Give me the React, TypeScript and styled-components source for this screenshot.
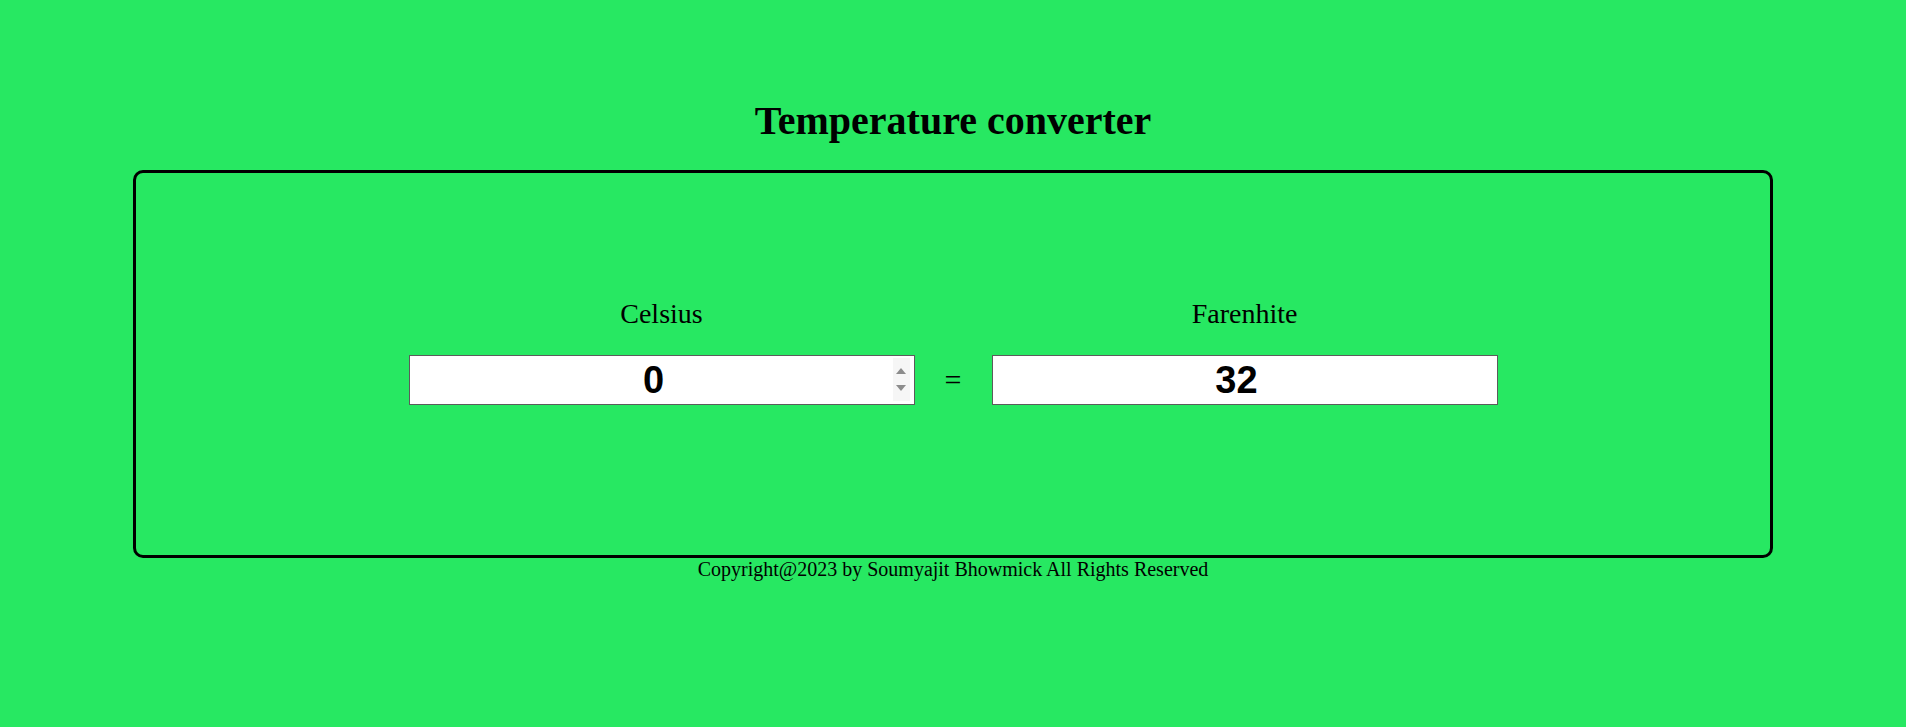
import { useState } from 'react';
import styled, { createGlobalStyle } from 'styled-components';

const GlobalStyle = createGlobalStyle`
  html, body {
    margin: 0;
    padding: 0;
    background: #27e862;
  }
  body {
    font-family: "Liberation Serif", "Times New Roman", serif;
    color: #000;
  }
`;

const Page = styled.div`
  min-height: 100vh;
  padding-top: 99px;
  box-sizing: border-box;
  display: flex;
  flex-direction: column;
  align-items: center;
`;

const Title = styled.h1`
  margin: 0 0 27px;
  font-size: 40px;
  line-height: 44px;
  font-weight: bold;
  text-align: center;
`;

const Card = styled.div`
  width: 86%;
  height: 388px;
  box-sizing: border-box;
  border: 3px solid #000;
  border-radius: 10px;
  padding-top: 125px;
  display: flex;
  justify-content: center;
  align-items: flex-start;
`;

const Row = styled.div`
  display: flex;
  align-items: flex-end;
  gap: 30px;
`;

const Column = styled.div`
  width: 506px;
  display: flex;
  flex-direction: column;
  align-items: center;
  gap: 26px;
`;

const Label = styled.label`
  font-size: 28px;
  line-height: 31px;
`;

const Field = styled.div`
  position: relative;
  width: 100%;
`;

const NumberInput = styled.input`
  display: block;
  width: 100%;
  height: 50px;
  box-sizing: border-box;
  margin: 0;
  padding: 0 18px 0 2px;
  border: 1px solid #5c5c5c;
  border-radius: 0;
  background: #fff;
  font-family: "Liberation Sans", Arial, sans-serif;
  font-size: 38px;
  font-weight: bold;
  color: #000;
  text-align: center;
  outline: none;
  -moz-appearance: textfield;

  &::-webkit-inner-spin-button,
  &::-webkit-outer-spin-button {
    -webkit-appearance: none;
    margin: 0;
  }
`;

const Spinner = styled.div`
  position: absolute;
  top: 3px;
  bottom: 4px;
  right: 5px;
  width: 17px;
  background: #f6f6f6;
  display: flex;
  flex-direction: column;
  justify-content: space-evenly;
  align-items: center;
`;

const Arrow = styled.button<{ $down?: boolean }>`
  width: 0;
  height: 0;
  padding: 0;
  border: none;
  border-left: 5px solid transparent;
  border-right: 5px solid transparent;
  ${p => p.$down ? 'border-top: 6px solid #8c8c8c;' : 'border-bottom: 6px solid #8c8c8c;'}
  background: transparent;
  cursor: pointer;
`;

const Equals = styled.div`
  width: 17px;
  height: 50px;
  display: flex;
  align-items: center;
  justify-content: center;
  font-size: 30px;
`;

const Footer = styled.div`
  font-size: 20px;
  line-height: 23px;
  text-align: center;
`;

export default function App() {
  const [celsius, setCelsius] = useState<number>(0);
  const fahrenheit = Math.round((celsius * 9 / 5 + 32) * 100) / 100;

  return (
    <>
      <GlobalStyle />
      <Page>
        <Title>Temperature converter</Title>
        <Card>
          <Row>
            <Column>
              <Label htmlFor="celsius">Celsius</Label>
              <Field>
                <NumberInput
                  id="celsius"
                  type="number"
                  value={celsius}
                  onChange={e => setCelsius(Number(e.target.value))}
                />
                <Spinner>
                  <Arrow aria-label="increase" onClick={() => setCelsius(c => c + 1)} />
                  <Arrow $down aria-label="decrease" onClick={() => setCelsius(c => c - 1)} />
                </Spinner>
              </Field>
            </Column>
            <Equals>=</Equals>
            <Column>
              <Label htmlFor="fahrenheit">Farenhite</Label>
              <Field>
                <NumberInput id="fahrenheit" type="number" value={fahrenheit} readOnly />
              </Field>
            </Column>
          </Row>
        </Card>
        <Footer>Copyright@2023 by Soumyajit Bhowmick All Rights Reserved</Footer>
      </Page>
    </>
  );
}
